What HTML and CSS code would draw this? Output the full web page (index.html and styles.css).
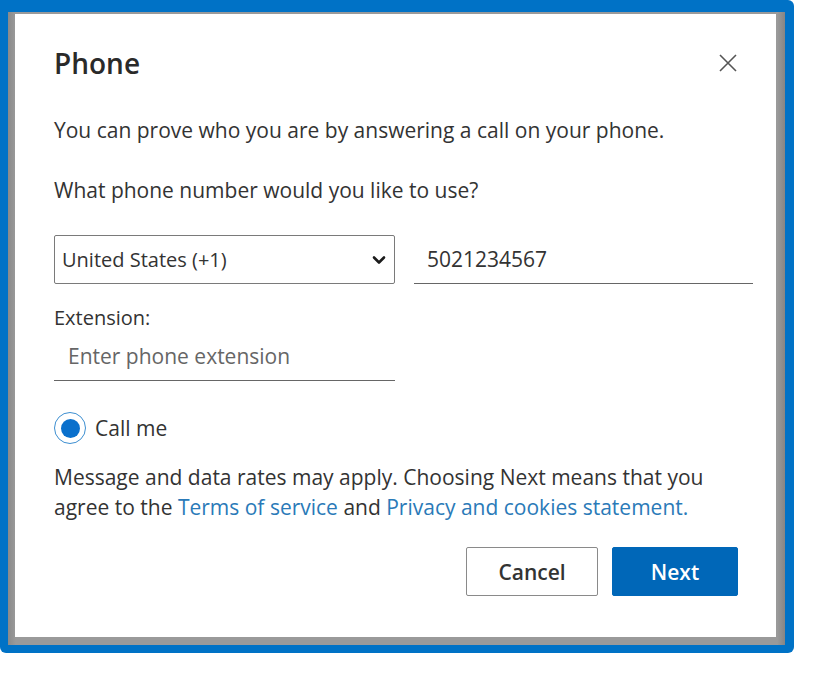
FILE: index.html
```html
<!DOCTYPE html>
<html lang="en">
<head>
<meta charset="utf-8">
<title>Phone</title>
<link rel="stylesheet" href="styles.css">
</head>
<body>
<div class="frame">
  <div class="backdrop">
    <div class="dialog">
      <div class="header">
        <h1 class="title">Phone</h1>
        <svg class="close" width="18" height="18" viewBox="0 0 18 18" aria-label="Close"><path d="M1 1 L17 17 M17 1 L1 17" stroke="#555" stroke-width="1.6" fill="none"/></svg>
      </div>
      <p class="text intro">You can prove who you are by answering a call on your phone.</p>
      <p class="text question">What phone number would you like to use?</p>
      <div class="phone-row">
        <div class="select">
          <span class="select-value">United States (+1)</span>
          <svg class="chevron" width="14" height="10" viewBox="0 0 14 10"><path d="M2 2.5 L7 7.5 L12 2.5" stroke="#1b1b1b" stroke-width="2.6" fill="none" stroke-linecap="round" stroke-linejoin="round"/></svg>
        </div>
        <div class="field phone"><span class="value">5021234567</span></div>
      </div>
      <div class="label">Extension:</div>
      <div class="field ext"><span class="placeholder">Enter phone extension</span></div>
      <div class="radio-row">
        <span class="radio"><span class="dot"></span></span>
        <span class="radio-label">Call me</span>
      </div>
      <p class="text terms">Message and data rates may apply. Choosing Next means that you agree to the <a class="link" href="#">Terms of service</a> and <a class="link" href="#">Privacy and cookies statement.</a></p>
      <div class="actions">
        <button class="btn cancel">Cancel</button>
        <button class="btn next">Next</button>
      </div>
    </div>
  </div>
</div>
</body>
</html>
```

FILE: styles.css
```css
* { box-sizing: border-box; }
html, body { margin: 0; padding: 0; background: #fff; }
body { font-family: "Open Sans", "Noto Sans", sans-serif; color: #333; }

.frame {
  width: 794px;
  height: 653px;
  background: #0072c6;
  border-radius: 0 6px 6px 6px;
  padding: 12px 9px 8px 8px;
}
.backdrop {
  height: 100%;
  background: linear-gradient(to right, #8a8a8a, #9a9a9a 1%, #9a9a9a 99%, #858585);
  padding: 2px 9px 8px 7px;
}
.dialog {
  height: 100%;
  background: #fff;
  padding: 31px 23px 0 39px;
  display: flex;
  flex-direction: column;
}
.header {
  display: flex;
  align-items: center;
  justify-content: space-between;
  height: 36px;
}
.title {
  margin: 0;
  font-size: 28px;
  font-weight: 600;
  line-height: 36px;
  color: #2a2a2a;
}
.close { margin-right: 16px; }

.text {
  margin: 0;
  font-size: 21px;
  line-height: 30px;
}
.intro { margin-top: 34px; }
.question { margin-top: 30px; }

.phone-row {
  margin-top: 30px;
  display: flex;
  gap: 19px;
  height: 49px;
}
.select {
  width: 341px;
  height: 49px;
  border: 1px solid #7a7a7a;
  border-radius: 2px;
  display: flex;
  align-items: center;
  justify-content: space-between;
  padding: 0 8px 0 7px;
  font-size: 20px;
}
.chevron { margin-top: 1px; }
.field {
  height: 49px;
  border-bottom: 1px solid #666;
  display: flex;
  align-items: center;
  font-size: 21px;
}
.phone { flex: 1; padding-left: 13px; }
.value { color: #333; }
.label {
  margin-top: 22px;
  font-size: 20px;
  line-height: 24px;
}
.ext {
  width: 341px;
  height: 51px;
  padding-left: 14px;
  padding-top: 2px;
}
.placeholder { color: #666; }

.radio-row {
  margin-top: 31px;
  display: flex;
  align-items: center;
  height: 32px;
}
.radio {
  width: 32px;
  height: 32px;
  border-radius: 50%;
  border: 1.5px solid #3d8fd1;
  display: flex;
  align-items: center;
  justify-content: center;
}
.dot {
  width: 19px;
  height: 19px;
  border-radius: 50%;
  background: #0a70cc;
}
.radio-label { margin-left: 9px; font-size: 21px; }

.terms { margin-top: 18px; }
.link { color: #2a7ab8; text-decoration: none; }

.actions {
  margin-top: 25px;
  display: flex;
  justify-content: flex-end;
  gap: 14px;
  padding-right: 15px;
}
.btn {
  height: 49px;
  font-family: inherit;
  font-size: 21px;
  font-weight: 600;
  border-radius: 2px;
  cursor: pointer;
}
.cancel {
  width: 132px;
  background: #fff;
  border: 1px solid #8a8a8a;
  color: #333;
}
.next {
  width: 126px;
  background: #0067b8;
  border: 1px solid #0067b8;
  color: #fff;
}
```
